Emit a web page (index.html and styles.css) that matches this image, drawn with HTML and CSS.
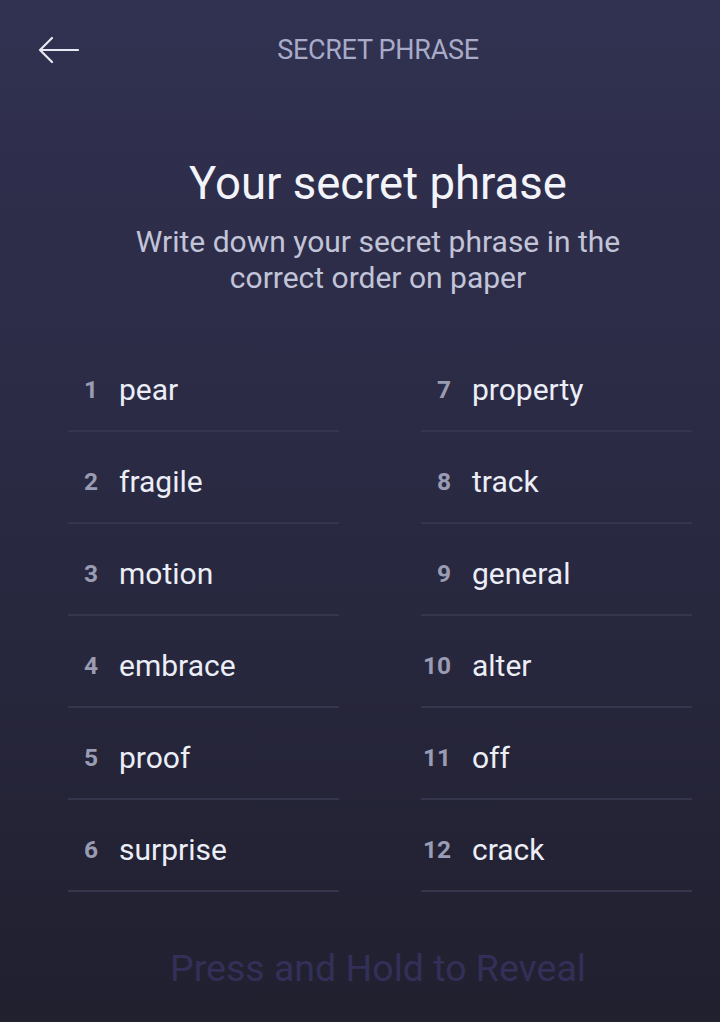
FILE: index.html
```html
<!DOCTYPE html>
<html>
<head>
<meta charset="utf-8">
<link rel="stylesheet" href="styles.css">
</head>
<body>
<div class="screen">
  <header class="topbar">
    <svg class="back" width="41" height="28" viewBox="0 0 41 28">
      <path d="M40 14H2M14 2L2 14L14 26" fill="none" stroke="#e8e9f2" stroke-width="2.2" stroke-linecap="round" stroke-linejoin="round"/>
    </svg>
    <div class="topbar-title">SECRET PHRASE</div>
  </header>
  <section class="intro">
    <h1 class="title">Your secret phrase</h1>
    <p class="subtitle">Write down your secret phrase in the<br>correct order on paper</p>
  </section>
  <ol class="words">
    <li class="word"><span class="num">1</span><span class="text">pear</span></li>
    <li class="word"><span class="num">2</span><span class="text">fragile</span></li>
    <li class="word"><span class="num">3</span><span class="text">motion</span></li>
    <li class="word"><span class="num">4</span><span class="text">embrace</span></li>
    <li class="word"><span class="num">5</span><span class="text">proof</span></li>
    <li class="word"><span class="num">6</span><span class="text">surprise</span></li>
    <li class="word"><span class="num">7</span><span class="text">property</span></li>
    <li class="word"><span class="num">8</span><span class="text">track</span></li>
    <li class="word"><span class="num">9</span><span class="text">general</span></li>
    <li class="word"><span class="num">10</span><span class="text">alter</span></li>
    <li class="word"><span class="num">11</span><span class="text">off</span></li>
    <li class="word"><span class="num">12</span><span class="text">crack</span></li>
  </ol>
  <div class="reveal">Press and Hold to Reveal</div>
</div>
</body>
</html>
```
FILE: styles.css
```css
html, body {
  margin: 0;
  padding: 0;
}
body {
  width: 720px;
  height: 1022px;
  overflow: hidden;
  font-family: Roboto, "Liberation Sans", sans-serif;
  background: linear-gradient(180deg, #313151 0%, #2a2a44 45%, #21202f 100%);
}
.screen {
  height: 1022px;
  display: flex;
  flex-direction: column;
}
.topbar {
  height: 100px;
  display: flex;
  align-items: center;
  padding-left: 38px;
}
.back {
  display: block;
  flex: none;
}
.topbar-title {
  flex: 1;
  text-align: center;
  padding-right: 43px;
  font-size: 27px;
  color: #a8abc8;
  letter-spacing: -0.3px;
}
.intro {
  padding-left: 36px;
  text-align: center;
  margin-top: 58px;
}
.title {
  margin: 0;
  font-size: 45.5px;
  line-height: 52px;
  font-weight: 400;
  color: #f3f4fa;
}
.subtitle {
  margin: 14px 0 0;
  font-size: 30px;
  line-height: 36px;
  color: #c2c4d8;
}
.words {
  list-style: none;
  margin: 44px 0 0;
  padding: 0 28px 0 68px;
  display: grid;
  grid-template-columns: 1fr 1fr;
  grid-template-rows: repeat(6, auto);
  grid-auto-flow: column;
  column-gap: 82px;
}
.word {
  display: flex;
  align-items: center;
  padding-top: 31px;
  padding-bottom: 23px;
  height: 36px;
  border-bottom: 2px solid #35354d;
}
.num {
  width: 30px;
  text-align: right;
  font-size: 24.5px;
  font-weight: 700;
  color: #9a9cb3;
}
.text {
  margin-left: 21px;
  font-size: 30px;
  color: #eceef7;
}
.reveal {
  margin-top: 56px;
  padding-left: 36px;
  text-align: center;
  font-size: 37.5px;
  line-height: 40px;
  color: #322f58;
}
```
